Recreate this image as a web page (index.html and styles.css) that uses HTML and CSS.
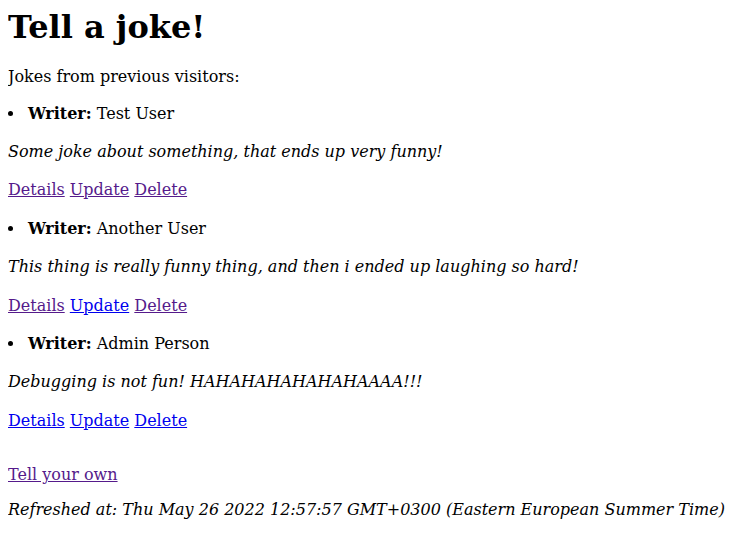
FILE: index.html
```html
<!DOCTYPE html>
<html>
<head>
<meta charset="utf-8">
<link rel="stylesheet" href="styles.css">
</head>
<body class="page">
<div class="app">
<h1 class="title">Tell a joke!</h1>
<p class="intro">Jokes from previous visitors:</p>
<ul class="jokes">
<li class="joke">
<span class="writer"><b>Writer:</b> Test User</span>
<p class="text"><i>Some joke about something, that ends up very funny!</i></p>
<p class="actions"><a href="#" class="link visited">Details</a> <a href="#" class="link visited">Update</a> <a href="#" class="link visited">Delete</a></p>
</li>
<li class="joke">
<span class="writer"><b>Writer:</b> Another User</span>
<p class="text"><i>This thing is really funny thing, and then i ended up laughing so hard!</i></p>
<p class="actions"><a href="#" class="link visited">Details</a> <a href="#" class="link">Update</a> <a href="#" class="link visited">Delete</a></p>
</li>
<li class="joke">
<span class="writer"><b>Writer:</b> Admin Person</span>
<p class="text"><i>Debugging is not fun! HAHAHAHAHAHAHAAAA!!!</i></p>
<p class="actions"><a href="#" class="link">Details</a> <a href="#" class="link">Update</a> <a href="#" class="link">Delete</a></p>
</li>
</ul>
<p class="own"><a href="#" class="link visited">Tell your own</a></p>
<p class="refreshed"><i>Refreshed at: Thu May 26 2022 12:57:57 GMT+0300 (Eastern European Summer Time)</i></p>
</div>
</body>
</html>
```
FILE: styles.css
```css
.page {
  margin: 8px;
  font-family: "DejaVu Serif", serif;
  font-size: 16px;
  color: #000;
  background: #fff;
}
.app {
  display: flow-root;
}
.title {
  font-size: 32px;
  font-weight: bold;
  margin: 0 0 21px;
}
.intro {
  margin: 0 0 16.5px;
}
.jokes {
  list-style: disc inside;
  padding: 0;
  margin: 0;
  line-height: 22.4px;
}
.joke {
  margin: 0;
}
.writer {
  margin-left: -2px;
}
.text, .actions {
  margin: 16px 0;
}
.own {
  margin: 32.5px 0 16px;
}
.refreshed {
  margin: 0;
}
.link {
  color: #0000ee;
}
.link.visited {
  color: #551a8b;
}
```
